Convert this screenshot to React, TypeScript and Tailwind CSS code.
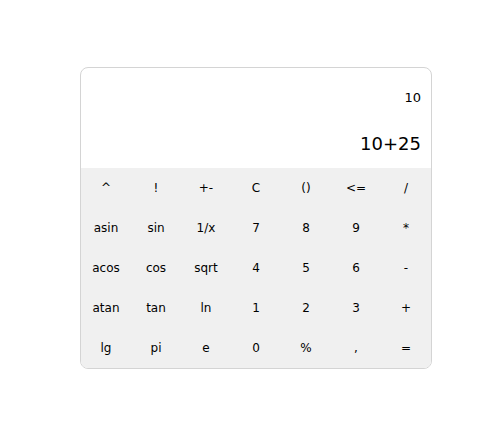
const keys = [
  "^", "!", "+-", "C", "()", "<=", "/",
  "asin", "sin", "1/x", "7", "8", "9", "*",
  "acos", "cos", "sqrt", "4", "5", "6", "-",
  "atan", "tan", "ln", "1", "2", "3", "+",
  "lg", "pi", "e", "0", "%", ",", "=",
];

function Calculator() {
  return (
    <div className="w-[352px] rounded-lg border border-[#d4d4d4] overflow-hidden bg-white">
      <div className="h-[100px] flex flex-col items-end pr-[10px] text-black">
        <div className="mt-[22px] text-[13px] leading-4">10</div>
        <div className="mt-[26px] text-[18px] leading-6">10+25</div>
      </div>
      <div className="grid grid-cols-7 bg-[#f0f0f0]">
        {keys.map((k) => (
          <button key={k} className="h-10 flex items-center justify-center text-[12px] text-black">
            {k}
          </button>
        ))}
      </div>
    </div>
  );
}

export default function App() {
  return (
    <div className="w-[497px] h-[432px] bg-white pt-[67px] pl-[80px]" style={{ fontFamily: '"DejaVu Sans", sans-serif' }}>
      <Calculator />
    </div>
  );
}
